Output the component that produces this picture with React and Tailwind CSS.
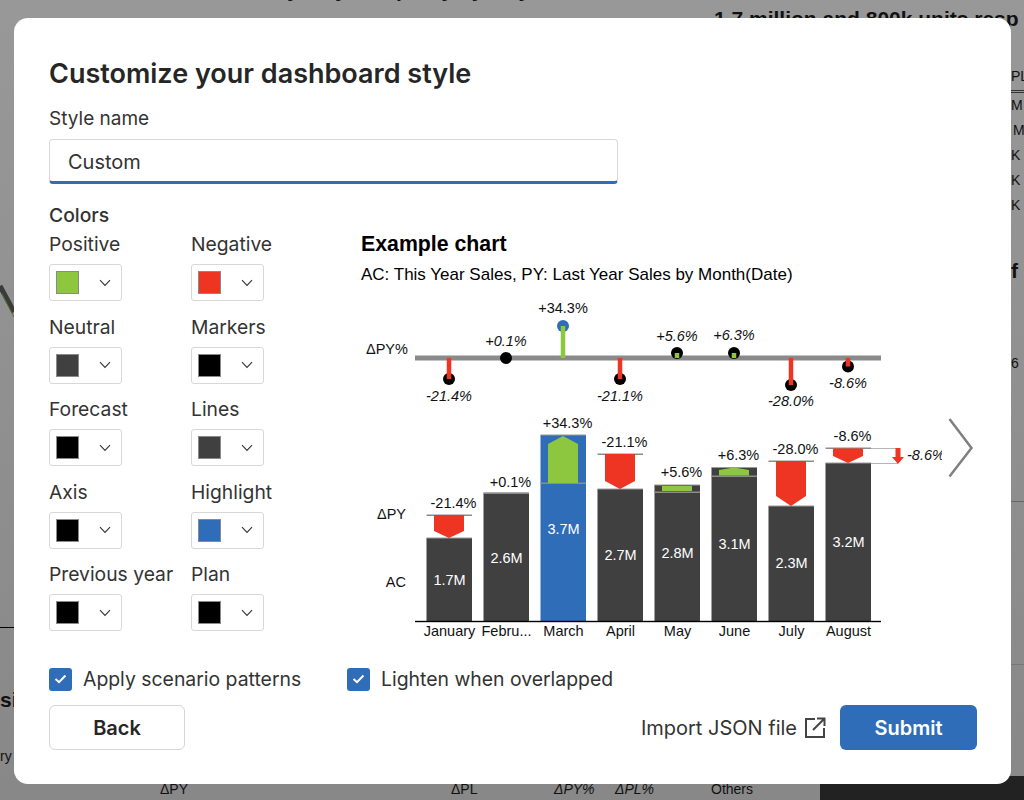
// App.jsx
// Customize dashboard style modal over a dimmed report page

const POSITIVE = '#8dc73f'
const NEGATIVE = '#ee3423'
const NEUTRAL = '#404040'
const BLUE = '#2f6db9'

const colorFields = [
  { label: 'Positive', color: 'bg-[#8dc73f]' },
  { label: 'Negative', color: 'bg-[#ee3423]' },
  { label: 'Neutral', color: 'bg-[#404040]' },
  { label: 'Markers', color: 'bg-black' },
  { label: 'Forecast', color: 'bg-black' },
  { label: 'Lines', color: 'bg-[#404040]' },
  { label: 'Axis', color: 'bg-black' },
  { label: 'Highlight', color: 'bg-[#2f6db9]' },
  { label: 'Previous year', color: 'bg-black' },
  { label: 'Plan', color: 'bg-black' },
]

// top small-multiple chart: delta markers around the axis
const markers = [
  { x: 449, y: 378, label: '-21.4%', ly: 400, stem: NEGATIVE },
  { x: 506, y: 357, label: '+0.1%', ly: 345 },
  { x: 563, y: 325, label: '+34.3%', ly: 312, stem: POSITIVE, dot: BLUE, upright: true },
  { x: 620, y: 378, label: '-21.1%', ly: 400, stem: NEGATIVE },
  { x: 677, y: 352, label: '+5.6%', ly: 340, stem: POSITIVE },
  { x: 734, y: 352, label: '+6.3%', ly: 339, stem: POSITIVE },
  { x: 791, y: 384, label: '-28.0%', ly: 405, stem: NEGATIVE },
  { x: 848, y: 365.5, label: '-8.6%', ly: 387, stem: NEGATIVE },
]

// main bars, coordinates follow the svg viewBox
const bars = [
  { x: 426.5, top: 537, name: 'January', value: '1.7M', vy: 584, delta: '-21.4%', dy: 507, line: 514, arrow: '434,514 464,514 464,530 449,537 434,530' },
  { x: 483.5, top: 492, name: 'Febru...', value: '2.6M', vy: 562, delta: '+0.1%', dy: 486, line: 492 },
  { x: 540.5, top: 434, name: 'March', value: '3.7M', vy: 533, delta: '+34.3%', dy: 427, line: 482, fill: BLUE, arrow: '548,482 578,482 578,443 563,435 548,443', good: true },
  { x: 597.5, top: 488, name: 'April', value: '2.7M', vy: 559, delta: '-21.1%', dy: 446, line: 453, arrow: '605,453 635,453 635,480 620,488 605,480' },
  { x: 654.5, top: 484, name: 'May', value: '2.8M', vy: 557, delta: '+5.6%', dy: 476, line: 491, arrow: '662,490 692,490 692,485 662,485', good: true },
  { x: 711.5, top: 466.5, name: 'June', value: '3.1M', vy: 548, delta: '+6.3%', dy: 459, line: 475, arrow: '719,474.5 749,474.5 749,469 734,466.5 719,469', good: true },
  { x: 768.5, top: 505, name: 'July', value: '2.3M', vy: 567, delta: '-28.0%', dy: 453, line: 460, arrow: '776,460 806,460 806,495 791,505 776,495' },
  { x: 825.5, top: 462, name: 'August', value: '3.2M', vy: 546, delta: '-8.6%', dy: 440, line: 447, arrow: '833,447.5 863,447.5 863,455 848,462 833,455' },
]

const ExampleChart = () => (
  <svg viewBox="361 300 619 340" width="619" height="340" className="block font-['Liberation_Sans',Arial,sans-serif]">
    <defs>
      <clipPath id="chart-clip">
        <rect x="361" y="300" width="581" height="340" />
      </clipPath>
    </defs>

    <g clipPath="url(#chart-clip)">
      {/* delta % chart */}
      <text x="366" y="353" fontSize="14.5" fill="#111">ΔPY%</text>
      <rect x="415" y="354.5" width="466" height="5" fill="#8a8a8a" />
      {markers.map((m) => (
        <g key={m.label + m.x}>
          <circle cx={m.x} cy={m.y} r="6" fill={m.dot || '#000'} />
          {m.stem && (
            <rect
              x={m.x - 2.25}
              y={Math.min(m.y, 357)}
              width="4.5"
              height={Math.abs(m.y - 357)}
              fill={m.stem}
            />
          )}
          <text
            x={m.x}
            y={m.ly}
            fontSize="14.5"
            textAnchor="middle"
            fontStyle={m.upright ? 'normal' : 'italic'}
            fill="#111"
          >
            {m.label}
          </text>
        </g>
      ))}

      {/* bars */}
      <text x="406" y="518" fontSize="14.5" textAnchor="end" fill="#111">ΔPY</text>
      <text x="406" y="586" fontSize="14.5" textAnchor="end" fill="#111">AC</text>
      {bars.map((b) => (
        <g key={b.name}>
          <rect x={b.x} y={b.top} width="45.5" height={620 - b.top} fill={b.fill || NEUTRAL} />
          <rect x={b.x} y={b.top - 0.5} width="45.5" height="1" fill="#9a9a9a" />
          {b.line && <rect x={b.x} y={b.line - 0.5} width="45.5" height="1.5" fill="#8c8c8c" />}
          {b.arrow && <polygon points={b.arrow} fill={b.good ? POSITIVE : NEGATIVE} />}
          <text x={b.x + 23} y={b.vy} fontSize="14.5" textAnchor="middle" fill="#fff">{b.value}</text>
          <text x={b.x + 27} y={b.dy} fontSize="14.5" textAnchor="middle" fill="#111">{b.delta}</text>
          <text x={b.x + 23} y="635" fontSize="14.5" textAnchor="middle" fill="#111">{b.name}</text>
        </g>
      ))}
      <rect x="415" y="619.8" width="466" height="1.4" fill="#000" />

      {/* total delta bracket on the right */}
      <rect x="871" y="447" width="27" height="1" fill="#b5b5b5" />
      <rect x="871" y="462" width="27" height="1" fill="#b5b5b5" />
      <polygon points="895.5,447 900.5,447 900.5,456 904,456 898,463 892,456 895.5,456" fill={NEGATIVE} />
      <text x="907" y="459" fontSize="14.5" fontStyle="italic" fill="#111">-8.6%</text>
    </g>

    {/* next arrow */}
    <polyline points="949.5,418 971.5,447 949.5,475.5" fill="none" stroke="#808080" strokeWidth="2.5" />
  </svg>
)

const ColorSelect = ({ label, color }) => (
  <div className="h-[82.5px]">
    <div className="text-[19.3px] leading-[24px] text-[#333] whitespace-nowrap">{label}</div>
    <div className="mt-[8px] w-[73px] h-[37px] flex items-center justify-between pl-[6px] pr-[10px] bg-white border border-[#d8d8d8] rounded-[3px]">
      <div className={`w-[23px] h-[23px] border border-[#8a8a8a] ${color}`}></div>
      <svg width="12" height="8" viewBox="0 0 12 8" fill="none" stroke="#333" strokeWidth="1.1">
        <path d="M1 1.2 6 6.4 11 1.2" />
      </svg>
    </div>
  </div>
)

const CheckRow = ({ label, className }) => (
  <label className={`flex items-center gap-[11px] ${className}`}>
    <span className="w-[23px] h-[23px] rounded-[3px] bg-[#2f6db9] flex items-center justify-center">
      <svg width="13" height="10" viewBox="0 0 13 10" fill="none" stroke="#fff" strokeWidth="2">
        <path d="M1.5 5 5 8.2 11.5 1.5" />
      </svg>
    </span>
    <span className="text-[19.4px] leading-[24px] text-[#333]">{label}</span>
  </label>
)

// what still shows of the report behind the dialog
const PageBehind = () => (
  <div className="h-full flex flex-col text-[#111] font-['Liberation_Sans',Arial,sans-serif]">
    {/* headings */}
    <div className="h-[18px] shrink-0 flex text-[21px] leading-[26px] font-bold whitespace-nowrap">
      <div className="ml-[215px] w-[499px] -mt-[23px]">AC is by July and partly by May</div>
      <div className="mt-[6px]">1.7 million and 800k units resp</div>
    </div>

    <div className="flex-1 flex justify-between">
      {/* left strip */}
      <div className="w-[14px] overflow-hidden">
        <svg className="block mt-[262px]" width="14" height="40" viewBox="0 0 14 40">
          <path d="M0 6 14 32" stroke="#3a3a3a" strokeWidth="5" fill="none" />
          <path d="M2 14 14 37" stroke="#55702c" strokeWidth="1" fill="none" />
        </svg>
        <div className="mt-[307px] h-px bg-black"></div>
        <div className="mt-[59px] text-[21px] leading-[26px] font-bold">si</div>
        <div className="mt-[35px] text-[14px] leading-[16px]">ry</div>
      </div>

      {/* right strip */}
      <div className="w-[13px] flex flex-col text-[14px] leading-[25px] whitespace-nowrap">
        <div className="mt-[46px]">PL</div>
        <div className="mt-px h-[3px] border-y border-[#333]"></div>
        <div>M</div>
        <div className="pl-[2px]">M</div>
        <div>K</div>
        <div>K</div>
        <div>K</div>
        <div className="mt-[40px] text-[21px] font-bold">f</div>
        <div className="mt-[68px]">6</div>
        <div className="mt-[125px] h-px bg-[#666]"></div>
        <div className="mt-[162px] h-px bg-[#777]"></div>
      </div>
    </div>

    {/* bottom table header */}
    <div className="h-[16px] shrink-0 flex items-start pl-[160px] text-[14px] leading-[16px]">
      <div className="w-[291px] -mt-[3px]">ΔPY</div>
      <div className="w-[103px] -mt-[3px]">ΔPL</div>
      <div className="w-[61px] -mt-[3px] italic">ΔPY%</div>
      <div className="w-[96px] -mt-[3px] italic">ΔPL%</div>
      <div className="w-[109px] -mt-[3px]">Others</div>
      <div className="flex-1 h-[24px] -mt-[8px] bg-[#222]"></div>
    </div>
  </div>
)

const App = () => {
  return (
    <div className="relative w-[1024px] h-[800px] overflow-hidden bg-gradient-to-b from-[#989898] to-[#888888] font-['Inter','Noto_Sans',sans-serif]">
      <PageBehind />

      {/* Dialog */}
      <div className="absolute left-[14px] top-[18px] w-[997px] h-[766px] flex flex-col bg-white rounded-[14px] pl-[35px] pr-[34px] pt-[36px] pb-[34px]">
        <h1 className="text-[27px] leading-[40px] font-semibold text-[#262626]">Customize your dashboard style</h1>

        <div className="mt-[13px] text-[19px] leading-[24px] text-[#333]">Style name</div>
        <div className="mt-[8px] w-[569px] h-[45px] flex items-center pl-[18px] pt-[3px] bg-white border border-[#d8d8d8] border-b-[3px] border-b-[#2f6db9] rounded-[4px] text-[20px] text-[#333]">
          Custom
        </div>

        <div className="mt-[19px] flex">
          {/* Colors */}
          <div className="w-[312px] shrink-0">
            <div className="text-[19.3px] leading-[24px] font-medium text-[#333]">Colors</div>
            <div className="mt-[5px] grid grid-cols-[142px_142px]">
              {colorFields.map((f) => (
                <ColorSelect key={f.label} label={f.label} color={f.color} />
              ))}
            </div>
          </div>

          {/* Example chart */}
          <div className="pt-[29px]">
            <div className="text-[21.3px] leading-[24px] font-bold text-black font-['Liberation_Sans',Arial,sans-serif]">Example chart</div>
            <div className="mt-[9px] text-[17px] leading-[20px] text-black font-['Liberation_Sans',Arial,sans-serif] whitespace-nowrap">AC: This Year Sales, PY: Last Year Sales by Month(Date)</div>
            <div className="mt-[16px]">
              <ExampleChart />
            </div>
          </div>
        </div>

        {/* Footer */}
        <div className="mt-auto">
          <div className="flex">
            <CheckRow label="Apply scenario patterns" className="w-[298px]" />
            <CheckRow label="Lighten when overlapped" />
          </div>
          <div className="mt-[14px] flex items-center">
            <button className="w-[136px] h-[45px] bg-white border border-[#d5d5d5] rounded-[6px] text-[20px] font-semibold text-[#262626]">Back</button>
            <div className="ml-auto flex items-center gap-[7px] text-[20px] text-[#333]">
              Import JSON file
              <svg width="22" height="22" viewBox="0 0 22 22" fill="none" stroke="#444" strokeWidth="2">
                <path d="M11 2H2v18h18v-9" />
                <path d="M9 13 20 2M13 1.5h7.5V9" />
              </svg>
            </div>
            <button className="ml-[14px] w-[137px] h-[45px] bg-[#2f6db9] rounded-[6px] text-[20px] font-semibold text-white">Submit</button>
          </div>
        </div>
      </div>
    </div>
  )
}

export default App
